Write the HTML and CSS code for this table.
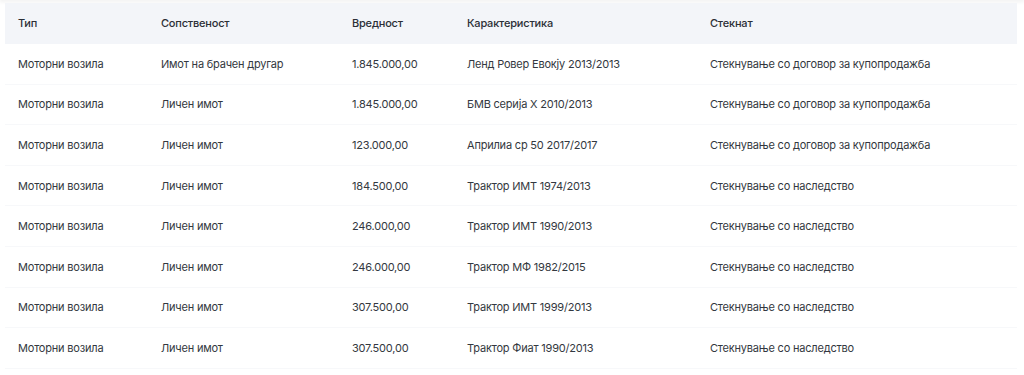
FILE: index.html
```html
<!DOCTYPE html>
<html lang="mk">
<head>
<meta charset="utf-8">
<link rel="stylesheet" href="styles.css">
</head>
<body>
<div class="topbar"></div>
<div class="wrap">
<table class="assets">
<thead>
<tr><th class="c1">Тип</th><th class="c2">Сопственост</th><th class="c3">Вредност</th><th class="c4">Карактеристика</th><th class="c5">Стекнат</th></tr>
</thead>
<tbody>
<tr><td>Моторни возила</td><td>Имот на брачен другар</td><td>1.845.000,00</td><td>Ленд Ровер Евокју 2013/2013</td><td>Стекнување со договор за купопродажба</td></tr>
<tr><td>Моторни возила</td><td>Личен имот</td><td>1.845.000,00</td><td>БМВ серија Х 2010/2013</td><td>Стекнување со договор за купопродажба</td></tr>
<tr><td>Моторни возила</td><td>Личен имот</td><td>123.000,00</td><td>Априлиа ср 50 2017/2017</td><td>Стекнување со договор за купопродажба</td></tr>
<tr><td>Моторни возила</td><td>Личен имот</td><td>184.500,00</td><td>Трактор ИМТ 1974/2013</td><td>Стекнување со наследство</td></tr>
<tr><td>Моторни возила</td><td>Личен имот</td><td>246.000,00</td><td>Трактор ИМТ 1990/2013</td><td>Стекнување со наследство</td></tr>
<tr><td>Моторни возила</td><td>Личен имот</td><td>246.000,00</td><td>Трактор МФ 1982/2015</td><td>Стекнување со наследство</td></tr>
<tr><td>Моторни возила</td><td>Личен имот</td><td>307.500,00</td><td>Трактор ИМТ 1999/2013</td><td>Стекнување со наследство</td></tr>
<tr><td>Моторни возила</td><td>Личен имот</td><td>307.500,00</td><td>Трактор Фиат 1990/2013</td><td>Стекнување со наследство</td></tr>
</tbody>
</table>
</div>
</body>
</html>
```

FILE: styles.css
```css
html, body {
  margin: 0;
  padding: 0;
  background: #ffffff;
  overflow: hidden;
}
body {
  font-family: Inter, "Noto Sans", sans-serif;
  font-size: 11px;
  color: #333840;
}
.topbar {
  height: 0;
  box-shadow: 0 0 4px 1px rgba(0, 0, 0, 0.12);
}
.wrap {
  padding: 3px 7px 0 5px;
}
.assets {
  width: 1012px;
  border-collapse: collapse;
  table-layout: fixed;
}
.assets th,
.assets td {
  text-align: left;
  padding: 0 13px;
  height: 40.6px;
  box-sizing: border-box;
  white-space: nowrap;
  letter-spacing: -0.2px;
}
.assets thead tr {
  background: #f3f5f9;
}
.assets th {
  font-weight: 500;
  color: #2b2f36;
}
.assets tbody tr {
  border-bottom: 1px solid #f7f8fa;
}
.c1 { width: 143px; }
.c2 { width: 191px; }
.c3 { width: 115px; }
.c4 { width: 243px; }
.c5 { width: 320px; }
```
